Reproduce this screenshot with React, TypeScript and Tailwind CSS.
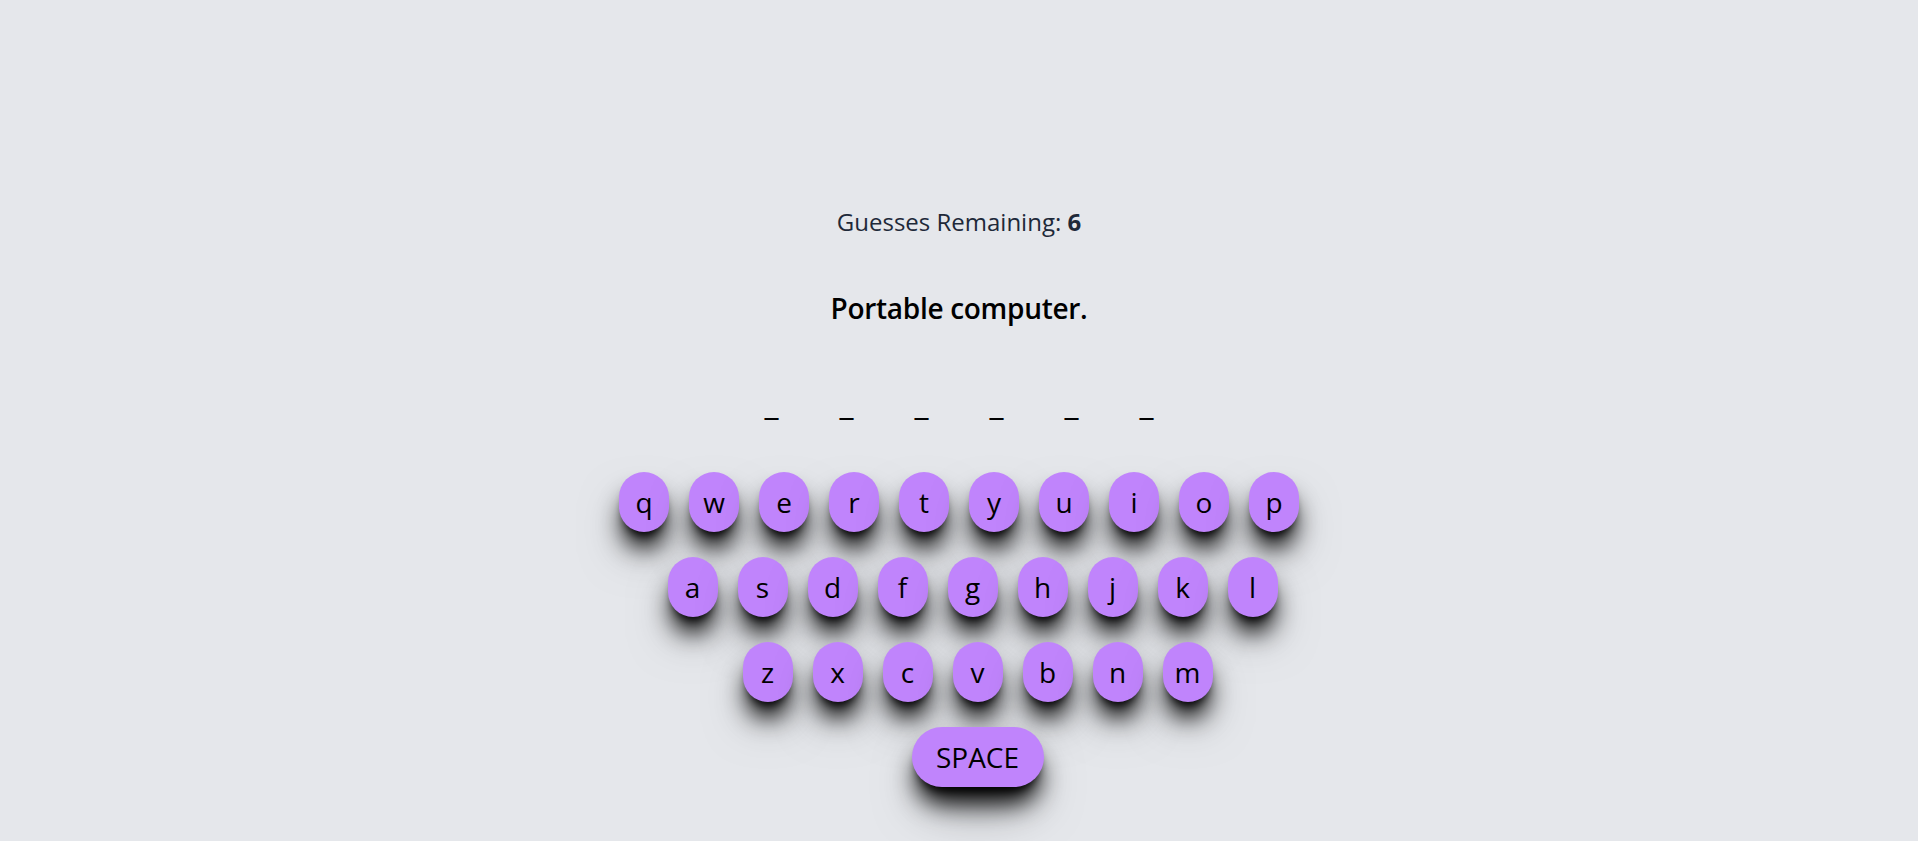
import React from "react";

const rows = ["qwertyuiop", "asdfghjkl", "zxcvbnm"];
const rowPad = ["pl-0", "pl-[27px]", "pl-[37px]"];

function Key({ label, wide }: { label: string; wide?: boolean }) {
  return (
    <button
      className={
        (wide ? "w-[132px] " : "w-[50px] ") +
        "h-[60px] rounded-full bg-[#c084fc] text-[28px] leading-9 text-black flex items-center justify-center shadow-[0_20px_25px_-5px_#000,0_8px_10px_-6px_#000,0_25px_50px_-12px_rgba(0,0,0,0.6)]"
      }
    >
      {label}
    </button>
  );
}

export default function App() {
  return (
    <div
      className="min-h-screen bg-[#e5e7eb] flex flex-col items-center pt-[206px]"
      style={{ fontFamily: '"Open Sans", sans-serif' }}
    >
      <p className="text-2xl leading-8 text-gray-800">
        Guesses Remaining: <span className="font-bold">6</span>
      </p>
      <h2 className="mt-[52px] text-[28px] leading-9 font-semibold tracking-[-0.3px] text-black">
        Portable computer.
      </h2>
      <div className="mt-[61px] flex">
        {Array.from({ length: 6 }).map((_, i) => (
          <span key={i} className="w-[75px] text-center text-[32px] leading-8 text-black">
            _
          </span>
        ))}
      </div>
      <div className="mt-[53px] flex flex-col items-center gap-[25px]">
        {rows.map((r, i) => (
          <div key={r} className={"flex gap-5 " + rowPad[i]}>
            {r.split("").map((c) => (
              <Key key={c} label={c} />
            ))}
          </div>
        ))}
        <div className="flex pl-[37px]">
          <Key label="SPACE" wide />
        </div>
      </div>
    </div>
  );
}
